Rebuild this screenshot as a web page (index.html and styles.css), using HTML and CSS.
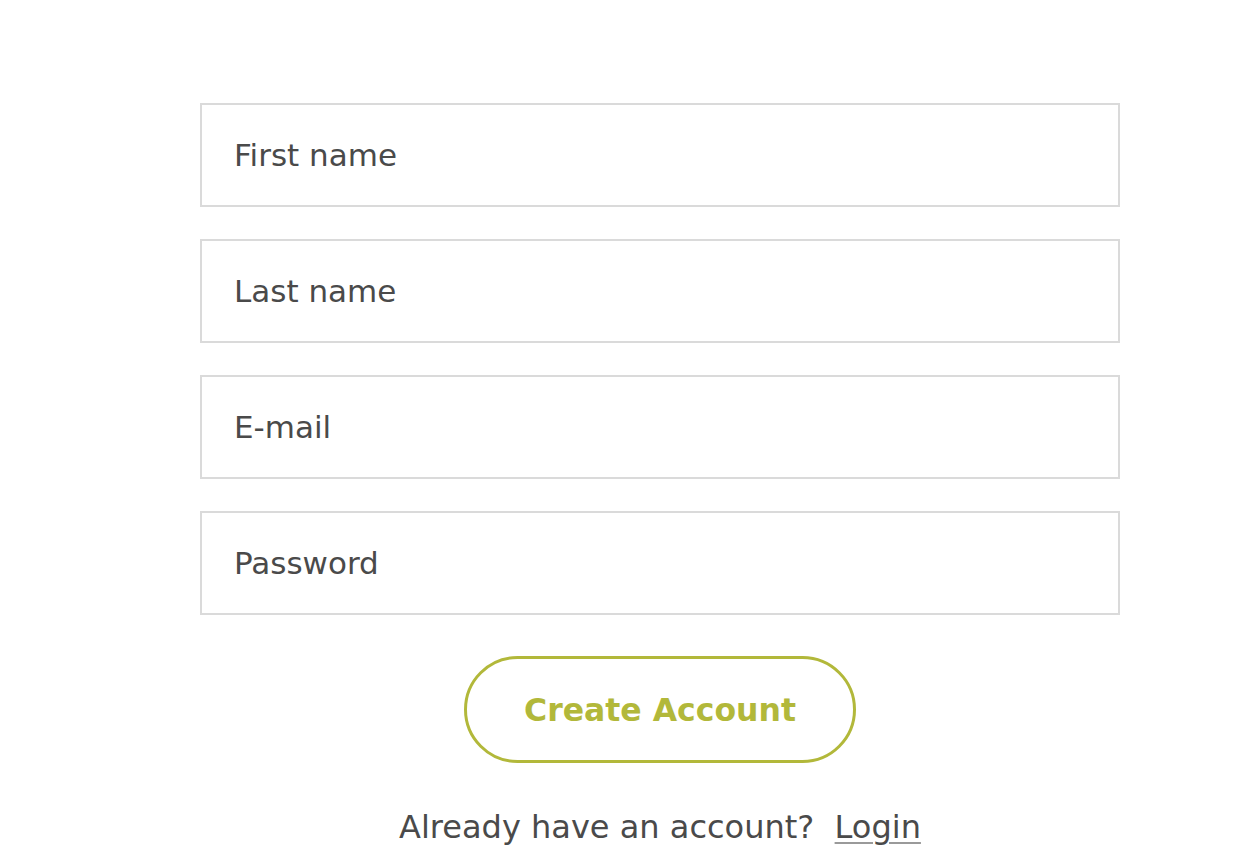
FILE: index.html
```html
<!DOCTYPE html>
<html>
<head>
<meta charset="utf-8">
<link rel="stylesheet" href="styles.css">
</head>
<body>
<form class="signup">
  <input class="field" type="text" placeholder="First name">
  <input class="field" type="text" placeholder="Last name">
  <input class="field" type="email" placeholder="E-mail">
  <input class="field" type="password" placeholder="Password">
  <button class="btn" type="button">Create Account</button>
  <p class="login">Already have an account?&nbsp; <a href="#">Login</a></p>
</form>
</body>
</html>
```
FILE: styles.css
```css
html, body {
  margin: 0;
  padding: 0;
  background: #fff;
}
body {
  font-family: "DejaVu Sans", "Liberation Sans", sans-serif;
  color: #4a4a4a;
}
.signup {
  width: 920px;
  margin-left: 200px;
  padding-top: 103px;
  display: flex;
  flex-direction: column;
  align-items: center;
}
.field {
  box-sizing: border-box;
  width: 920px;
  height: 104px;
  border: 2px solid #dadada;
  border-radius: 0;
  padding: 0 32px;
  margin: 0 0 32px 0;
  font-family: inherit;
  font-size: 31px;
  color: #4a4a4a;
  outline: none;
}
.field::placeholder {
  color: #4a4a4a;
  opacity: 1;
}
.btn {
  box-sizing: border-box;
  margin-top: 9px;
  width: 392px;
  height: 107px;
  border: 3px solid #b2b83a;
  border-radius: 54px;
  background: #fff;
  color: #b2b83a;
  font-family: inherit;
  font-weight: 700;
  font-size: 31.5px;
  padding: 0;
}
.login {
  margin: 43px 0 0 0;
  font-size: 32px;
  line-height: 42px;
}
.login a {
  color: #4a4a4a;
  text-decoration: underline;
  text-decoration-color: #9a9a9a;
  text-decoration-thickness: 2px;
  text-underline-offset: 4px;
}
```
